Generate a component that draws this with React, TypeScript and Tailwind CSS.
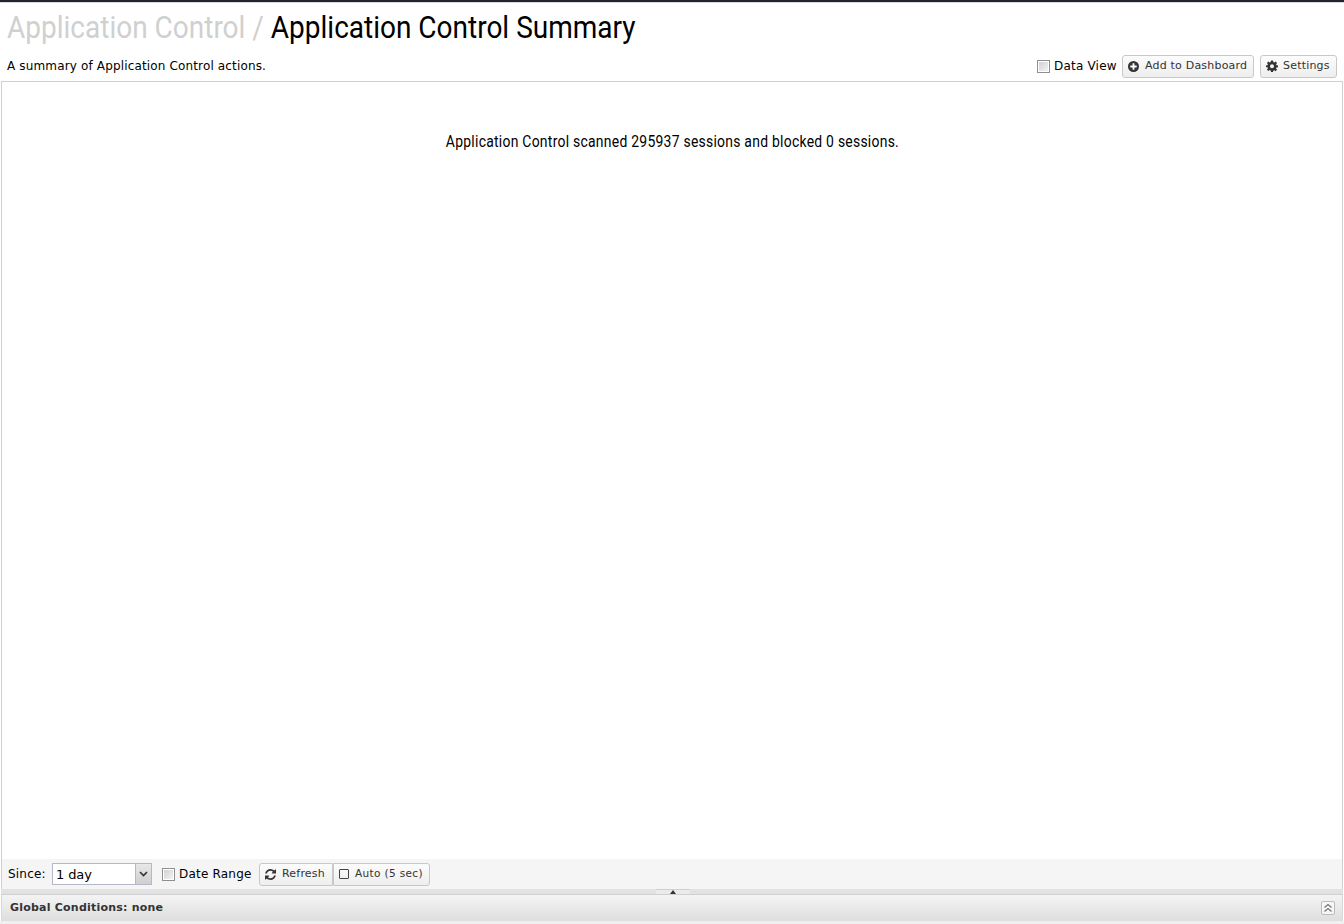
function Check() {
  return <span className="block shrink-0 w-[13px] h-[13px] border border-[#8f8f8f] bg-gradient-to-br from-[#cfcfcf] to-[#f6f6f6] shadow-[inset_0_0_0_1px_#fff]" />;
}

const btn =
  "h-[23px] flex items-center whitespace-nowrap border border-[#c8c8c8] bg-gradient-to-b from-[#fcfcfc] to-[#eeeeee] text-[11px] tracking-[0.2px] text-[#333]";

function PlusCircle() {
  return (
    <svg width="11" height="11" viewBox="0 0 12 12" className="shrink-0">
      <circle cx="6" cy="6" r="6" fill="#333" />
      <path d="M6 2.500v7M2.500 6h7" stroke="#fff" strokeWidth="2" />
    </svg>
  );
}

function Gear() {
  return (
    <svg width="12" height="12" viewBox="0 0 24 24" className="shrink-0">
      <path
        fill="#333"
        fillRule="evenodd"
        d="M10 1h4l.6 3.200 2 .8L19.300 3.200 22 6l-1.800 2.700.8 2L24 11v3.500l-3 .6-.8 2 1.800 2.600-2.700 2.600-2.700-1.800-2 .8L14 24h-4l-.6-3-2-.8-2.700 1.800L2 19.300l1.800-2.600-.8-2L0 14.500V11l3-.6.8-2L2 6l2.700-2.800L7.400 5l2-.8L10 1zm2 7.500a4 4 0 1 0 0 8 4 4 0 0 0 0-8z"
      />
    </svg>
  );
}

function RefreshIcon() {
  return (
    <svg width="11" height="11" viewBox="0 0 1536 1536" className="shrink-0">
      <path
        fill="#333"
        d="M1511 928q0 5-1 7-64 268-268 434.500T764 1536q-146 0-282.500-55T238 1324l-129 129q-19 19-45 19t-45-19-19-45V960q0-26 19-45t45-19h448q26 0 45 19t19 45-19 45l-137 137q71 66 161 102t187 36q134 0 250-65t186-179q11-17 53-117 8-23 30-23h192q13 0 22.500 9.500t9.500 22.500zm25-800v448q0 26-19 45t-45 19h-448q-26 0-45-19t-19-45 19-45l138-138Q969 256 768 256q-134 0-250 65T332 500q-11 17-53 117-8 23-30 23H50q-13 0-22.500-9.500T18 608v-7q65-268 270-434.500T768 0q146 0 284 55.500T1297 212l130-129q19-19 45-19t45 19 19 45z"
      />
    </svg>
  );
}

export default function App() {
  return (
    <div className="w-[1344px] h-[924px] flex flex-col overflow-hidden bg-white text-black font-['DejaVu_Sans',sans-serif]">
      <div className="h-[2px] shrink-0 bg-[#1f2430]" />
      <div className="h-[1px] shrink-0 bg-[#d8d8d8]" />
      <div className="h-[78px] shrink-0 flex flex-col px-[7px]">
        <h1 className="mt-[4px] h-[40px] leading-[40px] text-[32px] font-normal font-['Roboto',sans-serif] whitespace-nowrap origin-left scale-x-[0.875] w-[800px]">
          <span className="text-[#d0d0d0]">Application Control / </span>
          <span>Application Control Summary</span>
        </h1>
        <div className="flex items-center justify-between h-[24px] mt-[7px]">
          <span className="text-[12px] leading-[24px] tracking-[0.15px]">A summary of Application Control actions.</span>
          <div className="flex items-center">
            <Check />
            <span className="ml-[4px] mr-[6px] w-[62px] whitespace-nowrap text-[12px] tracking-[0.2px]">Data View</span>
            <span className={`${btn} rounded-[3px] w-[132px] pl-[5px] gap-[6px]`}>
              <PlusCircle />Add to Dashboard
            </span>
            <span className={`${btn} rounded-[3px] w-[77px] ml-[6px] pl-[5px] gap-[5px]`}>
              <Gear />Settings
            </span>
          </div>
        </div>
      </div>
      <main className="flex-1 mx-[1px] border-t border-x border-[#d0d0d0] flex justify-center pt-[50px]">
        <p className="h-[20px] leading-[20px] text-[16px] tracking-[0.3px] font-['Roboto',sans-serif] whitespace-nowrap scale-x-[0.87]">
          Application Control scanned 295937 sessions and blocked 0 sessions.
        </p>
      </main>
      <div className="h-[30px] shrink-0 mx-[1px] border-x border-[#d0d0d0] bg-[#f5f5f5] flex items-center pl-[6px] text-[12px] tracking-[0.2px]">
        <span className="w-[37px] whitespace-nowrap">Since:</span>
        <div className="ml-[7px] w-[100px] h-[22px] border border-[#b5b8c8] bg-white flex items-center">
          <span className="flex-1 pl-[3px] pt-[1px] text-[13px] tracking-[-0.1px]">1 day</span>
          <span className="w-[16px] h-[20px] border-l border-[#b5b8c8] bg-gradient-to-b from-[#e8e8e8] to-[#cfcfcf] flex items-center justify-center">
            <svg width="9" height="6" viewBox="0 0 9 6"><path d="M1 1l3.500 3.500L8 1" fill="none" stroke="#333" strokeWidth="1.600" /></svg>
          </span>
        </div>
        <span className="ml-[10px]"><Check /></span>
        <span className="ml-[4px] mr-[6px] w-[74px] whitespace-nowrap">Date Range</span>
        <span className={`${btn} rounded-l-[3px] w-[74px] pl-[5px] gap-[6px]`}>
          <RefreshIcon />Refresh
        </span>
        <span className={`${btn} rounded-r-[3px] w-[97px] pl-[5px] gap-[6px] !text-[10.5px] !tracking-[0.35px]`}>
          <span className="w-[10px] h-[10px] rounded-[1px] border border-[#444]" />Auto (5 sec)
        </span>
      </div>
      <div className="relative h-[6px] shrink-0 mx-[1px] bg-[#e2e2e2] border-b border-[#d0d0d0]">
        <div className="absolute left-[655px] top-0 w-[34px] h-[5px] bg-[#ebebeb] border-t border-[#d0d0d0] flex justify-center">
          <svg width="6" height="4" viewBox="0 0 6 4"><path d="M3 0l3 4H0z" fill="#333" /></svg>
        </div>
      </div>
      <div className="h-[26px] shrink-0 mx-[1px] border-x border-[#d8d8d8] bg-gradient-to-b from-[#f4f4f4] to-[#dedede] flex items-center justify-between pl-[8px] pr-[7px]">
        <span className="text-[11px] font-bold tracking-[0.22px] text-[#333]">Global Conditions: none</span>
        <span className="w-[14px] h-[14px] rounded-[2px] border border-[#bbb] bg-[#f6f6f6] flex items-center justify-center">
          <svg width="10" height="10" viewBox="0 0 10 10"><path d="M1.500 4.500L5 1.500l3.500 3M1.500 8.500L5 5.500l3.500 3" fill="none" stroke="#777" strokeWidth="1.300" /></svg>
        </span>
      </div>
      <div className="h-[3px] shrink-0 bg-[#f0f0f0]" />
    </div>
  );
}
